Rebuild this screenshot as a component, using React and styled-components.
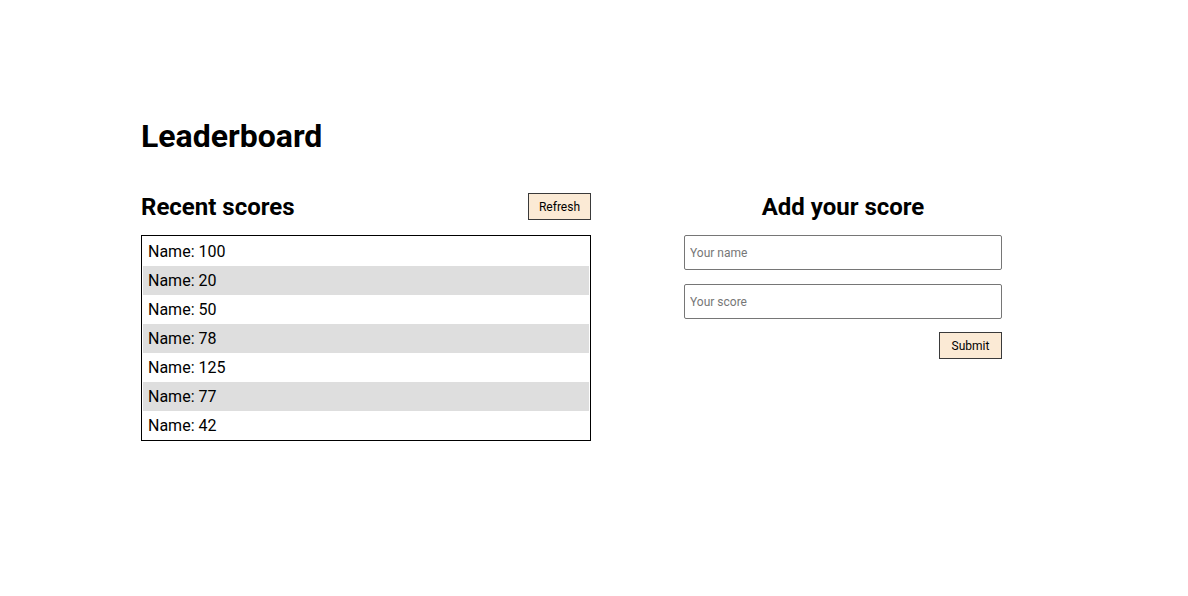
import React from "react";
import styled, { createGlobalStyle } from "styled-components";

const Global = createGlobalStyle`
  html, body { margin: 0; padding: 0; background: #fff; }
  body { font-family: Roboto, "Liberation Sans", sans-serif; color: #000; }
`;

const Page = styled.main`
  width: 906px;
  margin: 0 auto;
  padding-top: 117px;
`;

const Title = styled.h1`
  margin: 0 0 38px;
  font-size: 32px;
  font-weight: 700;
  line-height: 38px;
`;

const Columns = styled.div`
  display: flex;
  gap: 93px;
  align-items: flex-start;
`;

const Left = styled.section`
  width: 450px;
  display: flex;
  flex-direction: column;
  gap: 14px;
`;

const Right = styled.section`
  width: 318px;
  display: flex;
  flex-direction: column;
`;

const HeaderRow = styled.div`
  display: flex;
  justify-content: space-between;
  align-items: flex-start;
  height: 28px;
`;

const Heading = styled.h2`
  margin: 0;
  font-size: 24px;
  font-weight: 700;
  line-height: 28px;
  text-align: ${(p) => (p.$center ? "center" : "left")};
`;

const Button = styled.button`
  box-sizing: border-box;
  width: 63px;
  height: 27px;
  padding: 0;
  background: #fbead5;
  border: 1px solid #3a3a3a;
  border-radius: 0;
  font-family: Roboto, "Liberation Sans", sans-serif;
  font-size: 12px;
  color: #000;
  cursor: pointer;
  align-self: ${(p) => p.$align || "auto"};
  margin-top: ${(p) => p.$mt || 0}px;
`;

const List = styled.ul`
  list-style: none;
  margin: 0;
  padding: 1px 1px 0;
  border: 1px solid #000;
`;

const Row = styled.li`
  height: 29px;
  line-height: 29px;
  padding-left: 5px;
  font-size: 16px;
  background: ${(p) => (p.$alt ? "#dedede" : "#fff")};
`;

const Form = styled.form`
  display: flex;
  flex-direction: column;
  gap: 14px;
  margin-top: 14px;
`;

const Input = styled.input`
  box-sizing: border-box;
  width: 100%;
  height: 35px;
  padding: 0 5px;
  border: 1px solid #767676;
  border-radius: 2px;
  font-family: Roboto, "Liberation Sans", sans-serif;
  font-size: 12px;
  outline: none;
  &::placeholder { color: #777; }
`;

const scores = [100, 20, 50, 78, 125, 77, 42];

export default function App() {
  return (
    <>
      <Global />
      <Page>
        <Title>Leaderboard</Title>
        <Columns>
          <Left>
            <HeaderRow>
              <Heading>Recent scores</Heading>
              <Button type="button">Refresh</Button>
            </HeaderRow>
            <List>
              {scores.map((s, i) => (
                <Row key={i} $alt={i % 2 === 1}>Name: {s}</Row>
              ))}
            </List>
          </Left>
          <Right>
            <Heading $center>Add your score</Heading>
            <Form onSubmit={(e) => e.preventDefault()}>
              <Input placeholder="Your name" />
              <Input placeholder="Your score" />
              <Button type="submit" $align="flex-end" $mt={-1}>Submit</Button>
            </Form>
          </Right>
        </Columns>
      </Page>
    </>
  );
}
